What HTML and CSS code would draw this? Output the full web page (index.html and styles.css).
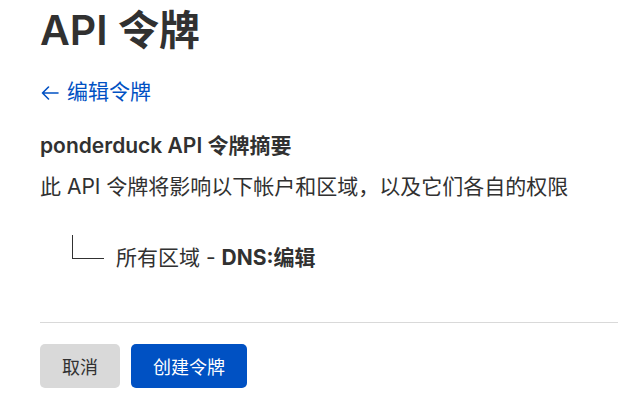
FILE: index.html
```html
<!DOCTYPE html>
<html lang="zh-CN">
<head>
<meta charset="utf-8">
<link rel="stylesheet" href="styles.css">
</head>
<body>
<main class="page">
  <h1 class="title">API 令牌</h1>
  <a class="back" href="#"><svg class="arrow" width="18" height="14" viewBox="0 0 18 14" aria-hidden="true"><path d="M17 7H1.5M7.5 1L1.5 7l6 6" fill="none" stroke="currentColor" stroke-width="1.6" stroke-linecap="round" stroke-linejoin="round"/></svg><span>编辑令牌</span></a>
  <h2 class="summary-title">ponderduck API 令牌摘要</h2>
  <p class="desc">此 API 令牌将影响以下帐户和区域，以及它们各自的权限</p>
  <div class="tree">
    <span class="branch"></span>
    <span class="tree-text">所有区域 - <strong>DNS:编辑</strong></span>
  </div>
  <hr class="divider">
  <div class="actions">
    <button class="btn btn-cancel" type="button">取消</button>
    <button class="btn btn-primary" type="button">创建令牌</button>
  </div>
</main>
</body>
</html>
```

FILE: styles.css
```css
html, body {
  margin: 0;
  padding: 0;
  background: #ffffff;
}
body {
  font-family: Inter, "Noto Sans CJK SC", sans-serif;
  color: #333333;
  overflow: hidden;
}
.page {
  padding-left: 40px;
  display: flex;
  flex-direction: column;
  align-items: flex-start;
}
.title {
  margin: 0;
  font-size: 41px;
  font-weight: 600;
  line-height: 60px;
  color: #313131;
}
.back {
  margin-top: 16px;
  font-size: 21px;
  line-height: 32px;
  height: 32px;
  color: #0051c3;
  text-decoration: none;
  display: flex;
  align-items: center;
  gap: 8px;
  padding-left: 1px;
}
.arrow {
  display: block;
  margin-top: 1px;
}
.summary-title {
  margin: 22px 0 0;
  font-size: 21px;
  line-height: 32px;
  font-weight: 600;
  color: #313131;
}
.desc {
  margin: 9px 0 0;
  font-size: 21px;
  line-height: 32px;
  color: #313131;
}
.tree {
  margin-top: 32px;
  margin-left: 32px;
  display: flex;
  align-items: flex-end;
  gap: 12px;
}
.branch {
  width: 31px;
  height: 23px;
  border-left: 1px solid #313131;
  border-bottom: 1px solid #313131;
  margin-bottom: 15px;
}
.tree-text {
  font-size: 21px;
  line-height: 32px;
  color: #313131;
}
.tree-text strong {
  font-weight: 700;
}
.divider {
  align-self: stretch;
  margin: 48px 0 0;
  border: 0;
  border-top: 1px solid #d9d9d9;
  width: 100%;
}
.actions {
  margin-top: 21px;
  display: flex;
  gap: 11px;
}
.btn {
  height: 44px;
  padding: 0 22px;
  border: 0;
  border-radius: 5px;
  font-family: Inter, "Noto Sans CJK SC", sans-serif;
  font-size: 18px;
  cursor: pointer;
}
.btn-cancel {
  background: #d9d9d9;
  color: #313131;
}
.btn-primary {
  background: #0051c3;
  color: #ffffff;
}
```
